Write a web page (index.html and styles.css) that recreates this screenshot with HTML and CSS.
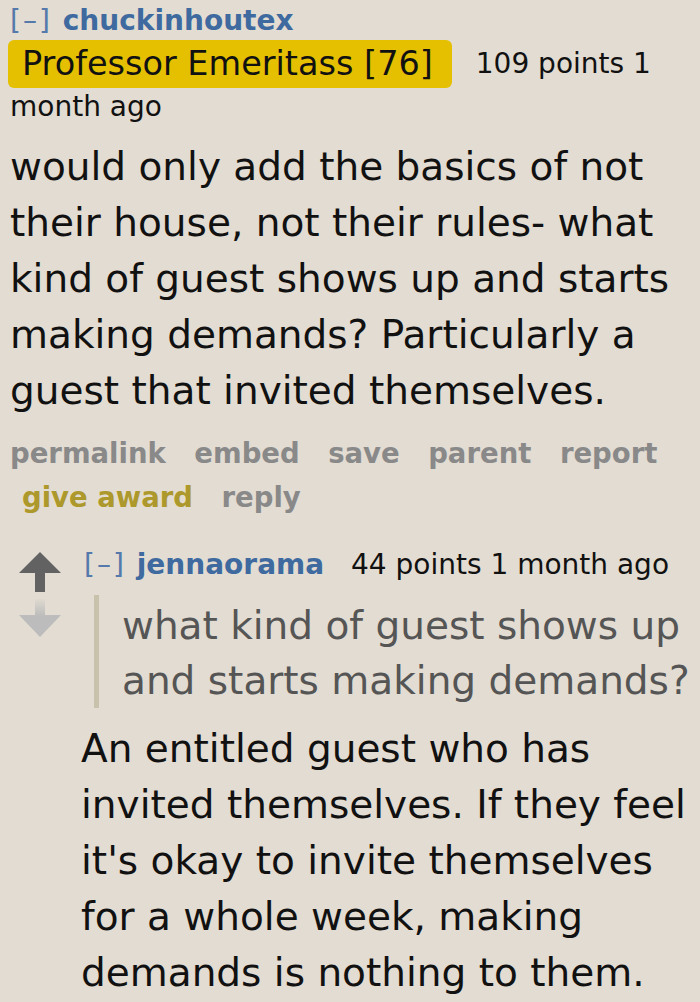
FILE: index.html
```html
<!DOCTYPE html>
<html>
<head>
<meta charset="utf-8">
<link rel="stylesheet" href="styles.css">
</head>
<body>
<div class="comment">
  <div class="tagline">
    <span class="expand">[–]</span> <span class="author">chuckinhoutex</span>
    <span class="flair">Professor Emeritass [76]</span>
    <span class="meta">109 points 1</span> <span class="meta">month ago</span>
  </div>
  <div class="md">
    <p>would only add the basics of not their house, not their rules- what kind of guest shows up and starts making demands? Particularly a guest that invited themselves.</p>
  </div>
  <ul class="buttons">
    <li>permalink</li>
    <li>embed</li>
    <li>save</li>
    <li>parent</li>
    <li>report</li>
    <li class="award">give award</li>
    <li>reply</li>
  </ul>
  <div class="child">
    <div class="arrows">
      <svg class="up" width="42" height="40" viewBox="0 0 42 40"><polygon points="21,0 42,21 26,21 26,40 16,40 16,21 0,21" fill="#626262"/></svg>
      <svg class="down" width="42" height="39" viewBox="0 0 42 39"><defs><linearGradient id="g" x1="0" y1="0" x2="0" y2="1"><stop offset="0" stop-color="#bcbcbc" stop-opacity="0.1"/><stop offset="0.45" stop-color="#bcbcbc"/></linearGradient></defs><polygon points="16,0 26,0 26,16 42,16 21,38 0,16 16,16" fill="url(#g)"/></svg>
    </div>
    <div class="entry">
      <div class="tagline tagline2">
        <span class="expand">[–]</span> <span class="author">jennaorama</span>
        <span class="meta meta2">44 points 1 month ago</span>
      </div>
      <blockquote class="quote">what kind of guest shows up and starts making demands?</blockquote>
      <p class="reply">An entitled guest who has invited themselves. If they feel it's okay to invite themselves for a whole week, making demands is nothing to them.</p>
    </div>
  </div>
</div>
</body>
</html>
```

FILE: styles.css
```css
html, body {
  margin: 0;
  padding: 0;
  background: #e3dcd2;
}
body {
  font-family: "DejaVu Sans", Verdana, sans-serif;
  color: #111;
  width: 700px;
  height: 1002px;
  overflow: hidden;
}
.comment {
  padding: 0 0 0 10px;
}
.tagline {
  font-size: 28px;
  line-height: 43px;
  margin-top: -1px;
}
.expand {
  color: #5479aa;
  letter-spacing: 2px;
  margin-right: 2px;
}
.author {
  color: #3e6a9f;
  font-weight: bold;
}
.flair {
  display: inline-block;
  background: #e5c000;
  color: #111;
  font-size: 33.5px;
  line-height: 48px;
  padding: 0 19px 0 14px;
  border-radius: 6px;
  margin: -5px 15px -5px -2px;
  vertical-align: -2px;
}
.meta {
  color: #111;
}
.md p {
  margin: 11px 0 0 0;
  font-size: 39px;
  line-height: 56px;
}
.buttons {
  list-style: none;
  margin: 12px 0 0 0;
  padding: 0;
  display: flex;
  flex-wrap: wrap;
  column-gap: 28.5px;
  font-size: 27.5px;
  font-weight: bold;
  line-height: 44px;
  color: #898989;
}
.buttons .award {
  color: #ad982b;
  margin-left: 12px;
}
.child {
  display: flex;
  margin-top: 24px;
}
.arrows {
  display: flex;
  flex-direction: column;
  gap: 7px;
  padding-top: 9px;
  width: 62px;
  margin-left: 9px;
  flex-shrink: 0;
}
.entry {
  flex: 1;
  min-width: 0;
}
.tagline2 {
  margin-top: 0;
  padding-left: 3px;
}
.meta2 {
  margin-left: 18px;
}
.quote {
  margin: 9px 0 0 13px;
  padding: 3px 0 0 23px;
  border-left: 5px solid #c8c1ac;
  color: #555;
  font-size: 39px;
  line-height: 55px;
}
.reply {
  margin: 13px 0 0 0;
  font-size: 39px;
  line-height: 56px;
}
```
